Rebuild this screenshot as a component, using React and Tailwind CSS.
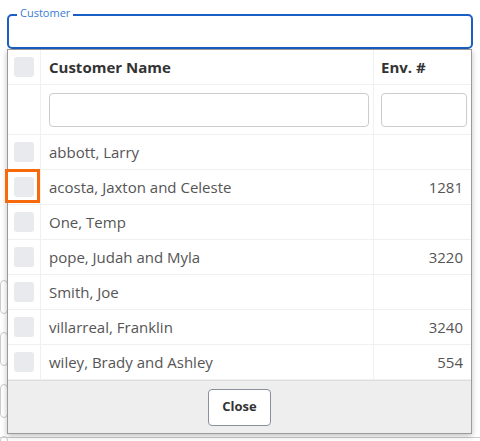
import React from 'react';

const rows = [
  { name: 'abbott, Larry', env: '' },
  { name: 'acosta, Jaxton and Celeste', env: '1281', focus: true },
  { name: 'One, Temp', env: '' },
  { name: 'pope, Judah and Myla', env: '3220' },
  { name: 'Smith, Joe', env: '' },
  { name: 'villarreal, Franklin', env: '3240' },
  { name: 'wiley, Brady and Ashley', env: '554' },
];

function Box({ focus }) {
  return (
    <div className="relative w-[20px] h-[20px] rounded-[3px] bg-[#e9eaed]">
      {focus && (
        <div className="absolute -left-[9px] -top-[8px] w-[35px] h-[34px] border-[3px] border-[#f76a0c]" />
      )}
    </div>
  );
}

export default function App() {
  return (
    <div
      className="relative w-[480px] h-[441px] bg-white overflow-hidden text-[#333]"
      style={{ fontFamily: '"Open Sans", "Noto Sans", sans-serif' }}
    >
      {/* page behind the menu */}
      <div className="absolute left-0 top-[280px] flex flex-col gap-[18px]">
        <div className="w-[8px] h-[34px] border border-[#ccc] rounded-[4px]" />
        <div className="w-[8px] h-[34px] border border-[#ccc] rounded-[4px]" />
        <div className="w-[8px] h-[34px] border border-[#ccc] rounded-[4px]" />
        <div className="w-[8px] h-[34px] border border-[#ccc] rounded-[4px]" />
      </div>
      <div className="absolute left-0 right-0 top-[437px] border-t border-[#ccc]" />

      <div className="px-[7px] pt-[14px]">
        <div className="relative h-[35px] border-2 border-[#1a5fc6] rounded-[5px]">
          <span className="absolute left-[8px] -top-[10px] px-[3px] bg-white text-[11px] leading-[14px] text-[#3a7bd5]">
            Customer
          </span>
        </div>

        <div className="relative w-[465px] border border-[#9a9a9a] bg-white shadow-[0_2px_6px_rgba(0,0,0,0.25)]">
          <div className="flex h-[35px] items-center border-b border-[#f0f0f0]">
            <div className="w-[33px] h-full flex items-center justify-center border-r border-[#f0f0f0]">
              <Box />
            </div>
            <div className="flex-1 h-full flex items-center pl-[8px] text-[15px] font-bold text-[#333]">
              Customer Name
            </div>
            <div className="w-[98px] h-full flex items-center pl-[7px] border-l border-[#f0f0f0] text-[15px] font-bold text-[#333]">
              Env. #
            </div>
          </div>
          <div className="flex h-[50px] items-center border-b border-[#f0f0f0]">
            <div className="w-[33px] h-full border-r border-[#f0f0f0]" />
            <div className="flex-1 h-full flex items-center pl-[8px] pr-[4px]">
              <div className="w-full h-[34px] border border-[#ccc] rounded-[4px]" />
            </div>
            <div className="w-[98px] h-full flex items-center pl-[7px] pr-[4px] border-l border-[#f0f0f0]">
              <div className="w-full h-[34px] border border-[#ccc] rounded-[4px]" />
            </div>
          </div>
          {rows.map((r) => (
            <div key={r.name} className="flex h-[35px] items-center border-b border-[#f0f0f0] last:border-b-0">
              <div className="w-[33px] h-full flex items-center justify-center border-r border-[#f0f0f0]">
                <Box focus={r.focus} />
              </div>
              <div className="flex-1 h-full flex items-center pl-[8px] text-[15px] text-[#555]">
                {r.name}
              </div>
              <div className="w-[98px] h-full flex items-center justify-end pr-[8px] border-l border-[#f0f0f0] text-[15px] text-[#555]">
                {r.env}
              </div>
            </div>
          ))}
          <div className="h-[53px] bg-[#eeeeee] border-t border-[#ddd] flex items-center justify-center">
            <button className="w-[63px] h-[37px] bg-white border border-[#8a8f9c] rounded-[4px] text-[13px] font-bold text-[#333]">
              Close
            </button>
          </div>
        </div>
      </div>
    </div>
  );
}
